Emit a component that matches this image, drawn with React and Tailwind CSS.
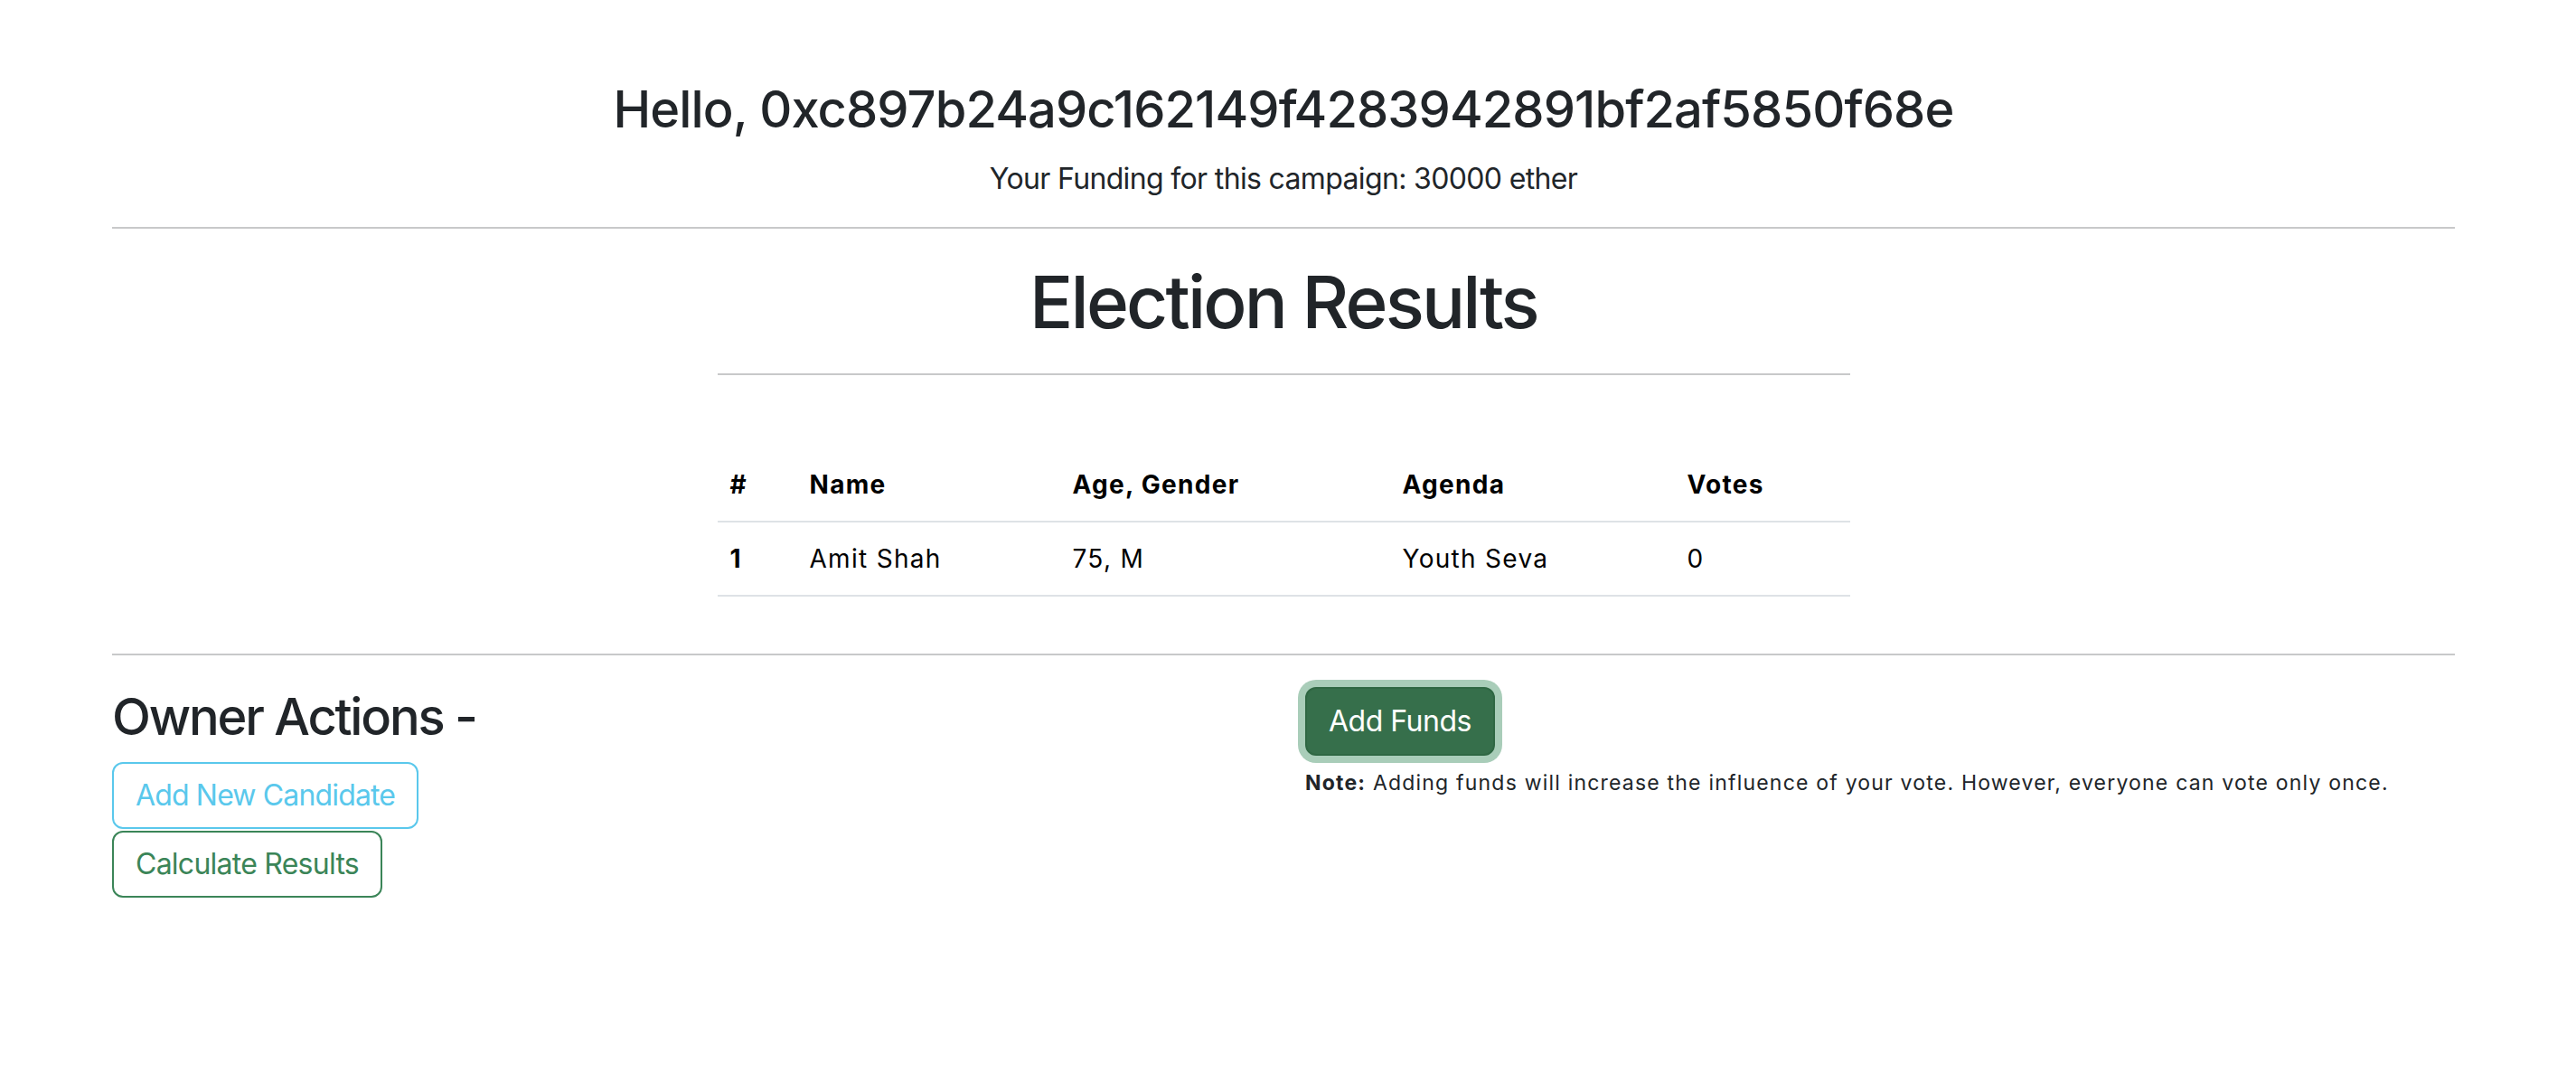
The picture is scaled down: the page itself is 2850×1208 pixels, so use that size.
export default function App() {
  const candidates = [
    { id: 1, name: 'Amit Shah', age: 75, gender: 'M', agenda: 'Youth Seva', votes: 0 },
  ]

  return (
    <div className="min-h-screen bg-white pl-[124px] pt-[88px] text-[#212529] font-['Inter',sans-serif]">
      <div className="w-[2592px]">
        <h3 className="text-center text-[56px] leading-[67px] font-medium tracking-[-0.9px]">
          Hello, 0xc897b24a9c162149f4283942891bf2af5850f68e
        </h3>
        <p className="mt-[19px] text-center text-[32px] leading-[48px] tracking-[-0.65px]">
          Your Funding for this campaign: 30000 ether
        </p>

        <hr className="mt-[29px] border-0 h-[2px] bg-[#c8c9ca]" />

        <div className="mx-auto w-[1253px]">
          <h1 className="mt-[33px] text-center text-[80px] leading-[96px] font-medium tracking-[-2.8px]">Election Results</h1>
          <hr className="mt-[31px] border-0 h-[2px] bg-[#c8c9ca]" />

          <table className="mt-[81px] w-full table-fixed border-collapse text-left text-[28px] leading-[42px] tracking-[1.3px] text-black">
            <thead>
              <tr className="border-b-2 border-[#dee2e6]">
                <th className="w-[86px] px-[14px] py-[19px] font-bold">#</th>
                <th className="w-[291px] px-[16px] py-[19px] font-bold">Name</th>
                <th className="w-[365px] px-[16px] py-[19px] font-bold">Age, Gender</th>
                <th className="w-[315px] px-[16px] py-[19px] font-bold">Agenda</th>
                <th className="w-[196px] px-[16px] py-[19px] font-bold">Votes</th>
              </tr>
            </thead>
            <tbody>
              {candidates.map((c) => (
                <tr key={c.id} className="border-b-2 border-[#dee2e6]">
                  <th className="px-[14px] py-[19px] font-bold">{c.id}</th>
                  <td className="px-[16px] py-[19px]">{c.name}</td>
                  <td className="px-[16px] py-[19px]">{c.age}, {c.gender}</td>
                  <td className="px-[16px] py-[19px]">{c.agenda}</td>
                  <td className="px-[16px] py-[19px]">{c.votes}</td>
                </tr>
              ))}
            </tbody>
          </table>
        </div>

        <hr className="mt-[63px] border-0 h-[2px] bg-[#c8c9ca]" />

        <div className="mt-[35px] grid grid-cols-2">
          <div className="flex flex-col items-start">
            <h3 className="text-[56px] leading-[67px] font-medium tracking-[-2.2px]">Owner Actions -</h3>
            <button className="mt-[16px] rounded-[12px] border-2 border-[#5ac8ec] bg-white px-[24px] py-[11px] text-[32px] leading-[48px] tracking-[-0.85px] text-[#5ac8ec]">
              Add New Candidate
            </button>
            <button className="mt-[2px] rounded-[12px] border-2 border-[#3b8558] bg-white px-[24px] py-[11px] text-[32px] leading-[48px] tracking-[-0.75px] text-[#3b8558]">
              Calculate Results
            </button>
          </div>
          <div className="pl-[24px] flex flex-col items-start">
            <button className="rounded-[12px] border-2 border-[#2f6743] bg-[#366f4b] px-[24px] py-[12px] text-[32px] leading-[48px] tracking-[-0.5px] text-white shadow-[0_0_0_8px_#a9cdb9]">
              Add Funds
            </button>
            <p className="mt-[13px] text-[23px] leading-[34px] tracking-[1.2px]">
              <b className="font-bold">Note:</b> Adding funds will increase the influence of your vote. However, everyone can vote only once.
            </p>
          </div>
        </div>
      </div>
    </div>
  )
}
